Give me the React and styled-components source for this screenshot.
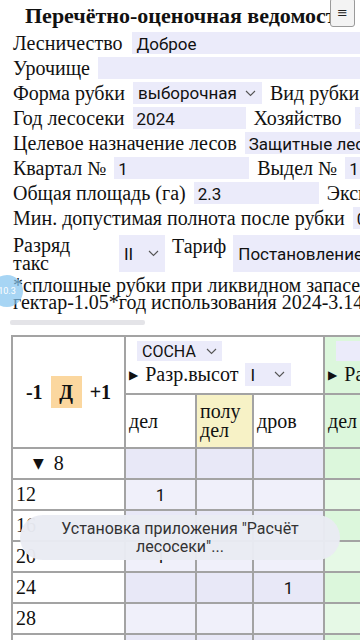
import React from "react";
import styled, { createGlobalStyle } from "styled-components";

const GlobalStyle = createGlobalStyle`
  html, body {
    margin: 0;
    padding: 0;
    overflow: hidden;
    background: #fff;
  }
  body {
    font-family: "Liberation Serif", "DejaVu Serif", serif;
    color: #111;
  }
`;

const rows = [
  { label: "8", group: true, cells: ["", "", ""] },
  { label: "12", cells: ["1", "", ""] },
  { label: "16", cells: ["", "", ""] },
  { label: "20", cells: ["1", "", ""] },
  { label: "24", cells: ["", "", "1"] },
  { label: "28", cells: ["", "", ""] },
  { label: "32", cells: ["", "", ""] },
];

const Chevron = () => (
  <svg width="11" height="7" viewBox="0 0 11 7">
    <path d="M1 1l4.5 4.5L10 1" fill="none" stroke="#555" strokeWidth="1.1" />
  </svg>
);

const Select = ({ value, width, height }) => (
  <SelectBox $w={width} $h={height}>
    <span>{value}</span>
    <Chevron />
  </SelectBox>
);

const App = () => (
  <Page>
    <GlobalStyle />
    <Title>Перечётно-оценочная ведомость</Title>
    <Form>
      <Row>
        <Label>Лесничество</Label>
        <Input $w={300} $ml={2}>Доброе</Input>
      </Row>
      <Row>
        <Label>Урочище</Label>
        <Input $w={300} />
      </Row>
      <Row>
        <Label>Форма рубки</Label>
        <Select value="выборочная" width={129} />
        <Label>Вид рубки</Label>
        <Input $w={160} />
      </Row>
      <Row>
        <Label>Год лесосеки</Label>
        <Input $w={113}>2024</Input>
        <Label>Хозяйство</Label>
        <Input $w={150} $ml={6}>Хвойное</Input>
      </Row>
      <Row>
        <Label>Целевое назначение лесов</Label>
        <Input $w={200}>Защитные леса</Input>
      </Row>
      <Row>
        <Label>Квартал №</Label>
        <Input $w={135}>1</Input>
        <Label>Выдел №</Label>
        <Input $w={100}>1</Input>
      </Row>
      <Row>
        <Label>Общая площадь (га)</Label>
        <Input $w={125}>2.3</Input>
        <Label>Эксплуатационная площадь</Label>
        <Input $w={100}>2.3</Input>
      </Row>
      <Row>
        <Label>Мин. допустимая полнота после рубки</Label>
        <Input $w={80}>0.4</Input>
      </Row>
      <TallRow>
        <WrapLabel>Разряд такс</WrapLabel>
        <Select value="II" width={46} height={37} />
        <Label>Тариф</Label>
        <Select value="Постановление" width={220} height={37} />
      </TallRow>
    </Form>
    <Note>
      <NoteLine>*сплошные рубки при ликвидном запасе древесины на 1</NoteLine>
      <NoteLine>гектар-1.05*год использования 2024-3.14</NoteLine>
    </Note>
    <ScrollThumb />

    <Table>
      <colgroup>
        <col style={{ width: 113 }} />
        <col style={{ width: 71 }} />
        <col style={{ width: 57 }} />
        <col style={{ width: 71 }} />
        <col style={{ width: 71 }} />
        <col style={{ width: 57 }} />
      </colgroup>
      <thead>
        <tr>
          <CornerCell rowSpan={2}>
            <Stepper>
              <span>-1</span>
              <DayBox>Д</DayBox>
              <span>+1</span>
            </Stepper>
          </CornerCell>
          <SpeciesCell colSpan={3}>
            <SpeciesSelect>
              СОСНА <Chevron />
            </SpeciesSelect>
            <HeightLine>
              <Tri>▶</Tri>Разр.высот
              <Select value="I" width={46} height={23} />
            </HeightLine>
          </SpeciesCell>
          <SpeciesCell colSpan={2} $tone="green">
            <SpeciesSelect $pad={40}>
              ЕЛЬ <Chevron />
            </SpeciesSelect>
            <HeightLine>
              <Tri>▶</Tri>Разр.высот
              <Select value="I" width={46} height={23} />
            </HeightLine>
          </SpeciesCell>
        </tr>
        <tr>
          <SubHead>дел</SubHead>
          <SubHead $tone="yellow">
            полу
            <br />
            дел
          </SubHead>
          <SubHead>дров</SubHead>
          <SubHead $tone="green">дел</SubHead>
          <SubHead $tone="green">
            полу
            <br />
            дел
          </SubHead>
        </tr>
      </thead>
      <tbody>
        {rows.map((r, i) => (
          <tr key={r.label}>
            <RowHead $group={r.group}>
              {r.group && <Tri>▼</Tri>}
              {r.label}
            </RowHead>
            {r.cells.map((c, j) => (
              <DataCell key={j} $alt={i % 2 === 1}>
                {c}
              </DataCell>
            ))}
            <DataCell $tone="green" $alt={i % 2 === 1} />
            <DataCell $tone="green" $alt={i % 2 === 1} />
          </tr>
        ))}
      </tbody>
    </Table>

    <MenuButton>≡</MenuButton>
    <Bubble>10.3</Bubble>
    <Toast>Установка приложения "Расчёт лесосеки"...</Toast>
  </Page>
);

export default App;

const Page = styled.div`
  position: relative;
  width: 760px;
  height: 640px;
  overflow: hidden;
  padding-top: 4px;
`;

const Title = styled.h1`
  margin: 0 0 4px 25px;
  font-size: 22px;
  font-weight: bold;
  line-height: 24px;
  white-space: nowrap;
`;

const Form = styled.div`
  display: flex;
  flex-direction: column;
  gap: 3px;
  padding-left: 13px;
`;

const Row = styled.div`
  display: flex;
  align-items: center;
  gap: 8px;
  height: 22px;
  white-space: nowrap;
`;

const TallRow = styled.div`
  display: flex;
  align-items: flex-start;
  gap: 7px;
  margin-top: 3px;
`;

const Label = styled.span`
  font-size: 20px;
  line-height: 22px;
  white-space: nowrap;
`;

const WrapLabel = styled.span`
  width: 80px;
  margin-right: 19px;
  font-size: 20px;
  line-height: 18px;
  padding-top: 1px;
`;

const Input = styled.div`
  flex: 0 0 auto;
  width: ${(p) => p.$w}px;
  height: 22px;
  margin-left: ${(p) => p.$ml || 0}px;
  padding: 0 4px;
  box-sizing: border-box;
  background: #ebebfa;
  font-family: Roboto, "Liberation Sans", sans-serif;
  font-size: 17px;
  line-height: 24px;
  color: #111;
`;

const SelectBox = styled.div`
  flex: 0 0 auto;
  display: flex;
  align-items: center;
  justify-content: space-between;
  width: ${(p) => p.$w}px;
  height: ${(p) => p.$h || 22}px;
  padding: 0 6px 0 5px;
  box-sizing: border-box;
  background: #ebebfa;
  font-family: Roboto, "Liberation Sans", sans-serif;
  font-size: 17px;
  color: #111;
  white-space: nowrap;
  overflow: hidden;

  span {
    overflow: hidden;
  }
`;

const Note = styled.div`
  margin-top: 5px;
  padding-left: 13px;
  font-size: 20px;
  line-height: 17px;
`;

const NoteLine = styled.div`
  white-space: nowrap;
`;

const ScrollThumb = styled.div`
  width: 135px;
  height: 5px;
  margin: 9px 0 0 10px;
  border-radius: 2px;
  background: #e4e4e8;
`;

const Table = styled.table`
  margin: 10px 0 0 11px;
  border-collapse: collapse;
  table-layout: fixed;
  width: 440px;
  border: 2px solid #a3a3a3;

  td,
  th {
    border: 2px solid #a3a3a3;
    padding: 0;
  }
`;

const tones = {
  green: "#dcf7dc",
  yellow: "#f7f2c6",
};

const Tri = styled.span`
  display: inline-block;
  margin-right: 4px;
  font-family: "DejaVu Sans", sans-serif;
  font-size: 12px;
  vertical-align: 2px;
`;

const CornerCell = styled.th`
  height: 104px;
  background: #fff;
`;

const Stepper = styled.div`
  display: flex;
  align-items: center;
  justify-content: center;
  gap: 8px;
  font-size: 20px;
  font-weight: bold;
`;

const DayBox = styled.span`
  display: flex;
  align-items: center;
  justify-content: center;
  width: 31px;
  height: 32px;
  background: #fbd79f;
  font-weight: bold;
`;

const SpeciesCell = styled.th`
  height: 52px;
  padding: 4px 0 0 3px !important;
  text-align: left;
  vertical-align: top;
  font-weight: normal;
  background: ${(p) => tones[p.$tone] || "#fff"};
`;

const SpeciesSelect = styled.div`
  display: inline-flex;
  align-items: center;
  gap: 10px;
  height: 20px;
  margin-left: 8px;
  padding: 0 5px 0 ${(p) => p.$pad || 5}px;
  background: #ebebfa;
  font-family: Roboto, "Liberation Sans", sans-serif;
  font-size: 16px;
  color: #111;
`;

const HeightLine = styled.div`
  display: flex;
  align-items: center;
  gap: 3px;
  margin-top: 2px;
  font-size: 20px;
  white-space: nowrap;

  ${SelectBox} {
    margin-left: 4px;
  }
`;

const SubHead = styled.th`
  height: 52px;
  padding-left: 3px !important;
  text-align: left;
  font-weight: normal;
  font-size: 20px;
  line-height: 19px;
  background: ${(p) => tones[p.$tone] || "#fff"};
`;

const RowHead = styled.td`
  height: 29px;
  padding-left: ${(p) => (p.$group ? "20px" : "3px")} !important;
  font-size: 20px;
  background: #fff;

  ${Tri} {
    margin-right: 10px;
    font-size: 14px;
  }
`;

const DataCell = styled.td`
  text-align: center;
  font-family: Roboto, "Liberation Sans", sans-serif;
  font-size: 17px;
  background: ${(p) =>
    p.$tone === "green" ? (p.$alt ? "#e6f9e6" : "#dcf7dc") : p.$alt ? "#f0f0fa" : "#e8e8f7"};
`;

const MenuButton = styled.div`
  position: absolute;
  top: -2px;
  left: 330px;
  width: 25px;
  height: 29px;
  display: flex;
  align-items: center;
  justify-content: center;
  border: 1px solid #9a9a9a;
  border-radius: 3px;
  background: #f3f3f3;
  font-family: "DejaVu Sans", sans-serif;
  font-size: 13px;
  color: #222;
  box-sizing: border-box;
`;

const Bubble = styled.div`
  position: absolute;
  top: 275px;
  left: -9px;
  width: 32px;
  height: 32px;
  border-radius: 50%;
  background: rgba(130, 195, 240, 0.7);
  color: #fff;
  font-family: Roboto, sans-serif;
  font-size: 9px;
  display: flex;
  align-items: center;
  justify-content: center;
`;

const Toast = styled.div`
  position: absolute;
  top: 515px;
  left: 20px;
  width: 320px;
  height: 45px;
  padding: 0 40px;
  box-sizing: border-box;
  border-radius: 23px;
  background: rgba(233, 235, 243, 0.97);
  display: flex;
  align-items: center;
  justify-content: center;
  text-align: center;
  font-family: Roboto, "Liberation Sans", sans-serif;
  font-size: 16px;
  line-height: 18px;
  color: #333;
`;
